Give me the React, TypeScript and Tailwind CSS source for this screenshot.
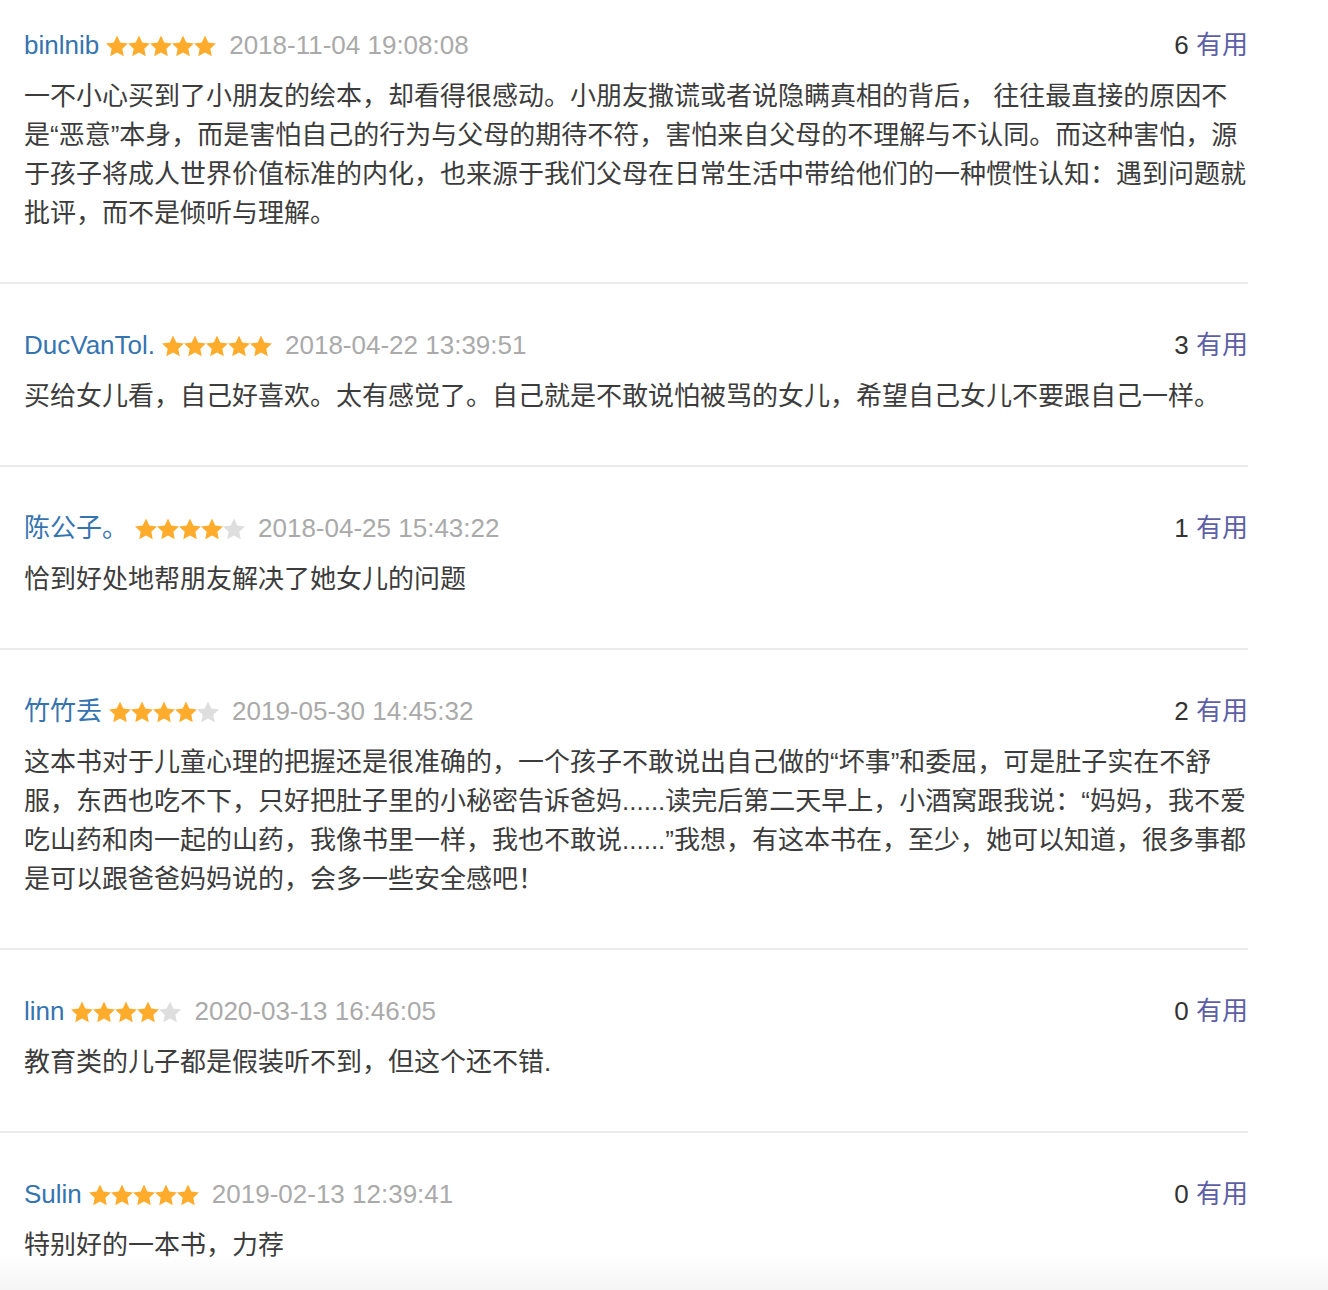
import React from 'react'

interface Review {
  name: string
  stars: number
  time: string
  useful: number
  text: string
}

const reviews: Review[] = [
  {
    name: 'binlnib',
    stars: 5,
    time: '2018-11-04 19:08:08',
    useful: 6,
    text: '一不小心买到了小朋友的绘本，却看得很感动。小朋友撒谎或者说隐瞒真相的背后， 往往最直接的原因不是“恶意”本身，而是害怕自己的行为与父母的期待不符，害怕来自父母的不理解与不认同。而这种害怕，源于孩子将成人世界价值标准的内化，也来源于我们父母在日常生活中带给他们的一种惯性认知：遇到问题就批评，而不是倾听与理解。',
  },
  {
    name: 'DucVanTol.',
    stars: 5,
    time: '2018-04-22 13:39:51',
    useful: 3,
    text: '买给女儿看，自己好喜欢。太有感觉了。自己就是不敢说怕被骂的女儿，希望自己女儿不要跟自己一样。',
  },
  {
    name: '陈公子。',
    stars: 4,
    time: '2018-04-25 15:43:22',
    useful: 1,
    text: '恰到好处地帮朋友解决了她女儿的问题',
  },
  {
    name: '竹竹丢',
    stars: 4,
    time: '2019-05-30 14:45:32',
    useful: 2,
    text: '这本书对于儿童心理的把握还是很准确的，一个孩子不敢说出自己做的“坏事”和委屈，可是肚子实在不舒服，东西也吃不下，只好把肚子里的小秘密告诉爸妈......读完后第二天早上，小酒窝跟我说：“妈妈，我不爱吃山药和肉一起的山药，我像书里一样，我也不敢说......”我想，有这本书在，至少，她可以知道，很多事都是可以跟爸爸妈妈说的，会多一些安全感吧！',
  },
  {
    name: 'linn',
    stars: 4,
    time: '2020-03-13 16:46:05',
    useful: 0,
    text: '教育类的儿子都是假装听不到，但这个还不错.',
  },
  {
    name: 'Sulin',
    stars: 5,
    time: '2019-02-13 12:39:41',
    useful: 0,
    text: '特别好的一本书，力荐',
  },
]

const Star = ({ on }: { on: boolean }) => (
  <svg width="22" height="22" viewBox="0 0 22 22" className="block">
    <polygon
      points="11,0.5 14.29,7.47 21.94,8.45 16.33,13.73 17.76,21.3 11,17.6 4.24,21.3 5.67,13.73 0.06,8.45 7.71,7.47"
      fill={on ? '#ffac2d' : '#dedede'}
    />
  </svg>
)

const Stars = ({ n }: { n: number }) => (
  <span className="flex ml-[7px] mr-[13px]">
    {[0, 1, 2, 3, 4].map((i) => (
      <Star key={i} on={i < n} />
    ))}
  </span>
)

export default function App() {
  return (
    <div
      className="relative h-[1290px] w-full overflow-hidden bg-white"
      style={{ fontFamily: '"Liberation Sans", "Noto Sans CJK SC", Arial, sans-serif' }}
    >
      <div className="w-[1248px]">
        {reviews.map((r, idx) => (
          <div
            key={idx}
            className={`${idx === 0 ? 'pt-[26px]' : 'pt-[42px]'} pb-[49px] pl-[24px] border-b-2 border-[#ebebeb]`}
          >
            <div className="flex items-center justify-between text-[26px] leading-[39px]">
              <div className="flex items-center">
                <span className="text-[#3574b0]">{r.name}</span>
                <Stars n={r.stars} />
                <span className="text-[#aaaaaa]">{r.time}</span>
              </div>
              <div>
                <span className="text-[#333333]">{r.useful} </span>
                <span className="text-[#5d5fa6]">有用</span>
              </div>
            </div>
            <p className="mt-[12px] text-[26px] leading-[39px] text-[#3c3c3c]">{r.text}</p>
          </div>
        ))}
      </div>
      <div className="absolute bottom-0 left-0 right-0 h-[36px] bg-linear-to-b from-white/0 to-[#f5f5f5]"></div>
    </div>
  )
}
